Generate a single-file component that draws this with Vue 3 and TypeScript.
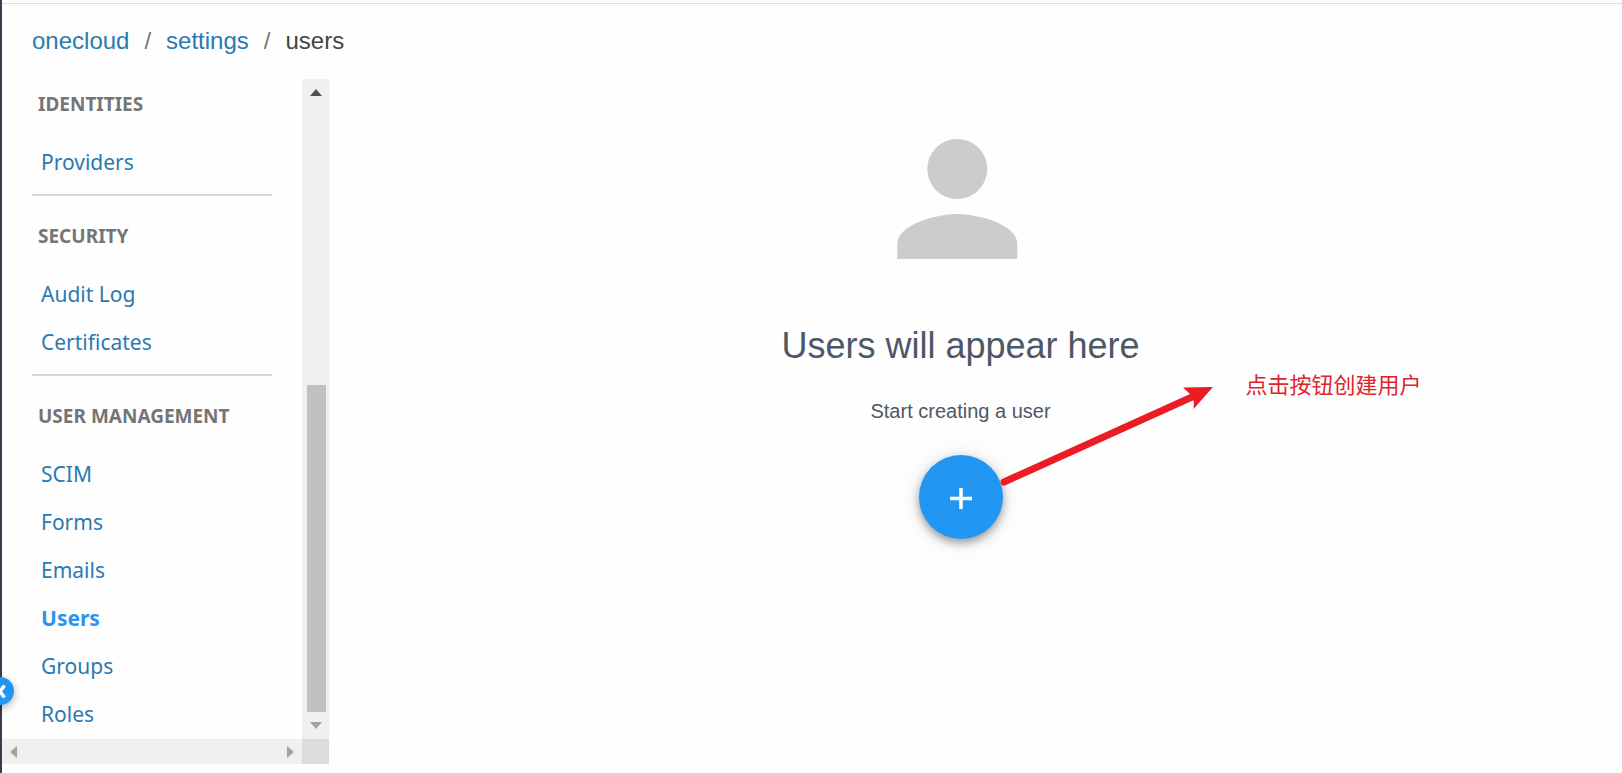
<script setup lang="ts">
interface NavSection {
  title: string
  items: string[]
}

const active = 'Users'

const sections: NavSection[] = [
  { title: 'IDENTITIES', items: ['Providers'] },
  { title: 'SECURITY', items: ['Audit Log', 'Certificates'] },
  { title: 'USER MANAGEMENT', items: ['SCIM', 'Forms', 'Emails', 'Users', 'Groups', 'Roles'] },
]
</script>

<template>
  <div class="page">
    <nav class="crumbs" aria-label="Breadcrumb">
      <a href="#onecloud">onecloud</a>
      <span class="slash">/</span>
      <a href="#settings">settings</a>
      <span class="slash">/</span>
      <span class="current">users</span>
    </nav>

    <div class="body">
      <aside class="sidebar">
        <nav class="list" aria-label="Settings">
          <section v-for="section in sections" :key="section.title" class="group">
            <h2>{{ section.title }}</h2>
            <a
              v-for="item in section.items"
              :key="item"
              href="#"
              class="item"
              :class="{ active: item === active }"
            >{{ item }}</a>
          </section>
        </nav>

        <div class="bar vertical">
          <button type="button" aria-label="Scroll up">
            <svg width="12" height="7" viewBox="0 0 12 7"><path d="M6 0 12 7H0z" fill="#505050" /></svg>
          </button>
          <div class="track"><div class="thumb"></div></div>
          <button type="button" aria-label="Scroll down">
            <svg width="12" height="7" viewBox="0 0 12 7"><path d="M0 0h12L6 7z" fill="#a3a3a3" /></svg>
          </button>
        </div>

        <div class="bar horizontal">
          <button type="button" aria-label="Scroll left">
            <svg width="7" height="12" viewBox="0 0 7 12"><path d="M7 0v12L0 6z" fill="#a3a3a3" /></svg>
          </button>
          <button type="button" aria-label="Scroll right">
            <svg width="7" height="12" viewBox="0 0 7 12"><path d="M0 0 7 6 0 12z" fill="#a3a3a3" /></svg>
          </button>
        </div>
        <div class="corner"></div>
      </aside>

      <main class="empty">
        <svg class="person" viewBox="0 0 25 24" aria-hidden="true">
          <circle cx="12" cy="8" r="4" />
          <path d="M12 14c-2.67 0-8 1.34-8 4v2h16v-2c0-2.66-5.33-4-8-4z" />
        </svg>
        <h1>Users will appear here</h1>
        <p>Start creating a user</p>
        <div class="action">
          <button type="button" class="add" aria-label="Create user">
            <svg width="24" height="24" viewBox="0 0 24 24"><path d="M12 3v21M1 13.5h22" stroke="#fff" stroke-width="3.500" /></svg>
          </button>
          <div class="note">
            <svg width="216" height="106" viewBox="0 0 216 106" aria-hidden="true">
              <path d="M4 101 192 16" stroke="#ec1c24" stroke-width="7" stroke-linecap="round" />
              <path d="M213 6 183 6.500 190 13 194 21 193.500 28z" fill="#ec1c24" />
            </svg>
            <span>点击按钮创建用户</span>
          </div>
        </div>
      </main>
    </div>

    <button type="button" class="collapse" aria-label="Collapse menu">
      <svg width="28" height="28" viewBox="0 0 28 28">
        <path d="M18.500 8.500 14 14.500 18.500 20.500" fill="none" stroke="#fff" stroke-width="3.500" />
      </svg>
    </button>
  </div>
</template>

<style>
body {
  margin: 0;
  background: #fefefe;
}
</style>

<style scoped>
.page {
  position: relative;
  box-sizing: border-box;
  height: 100vh;
  min-height: 600px;
  display: flex;
  flex-direction: column;
  padding: 3px 0 9px 2px;
  background: linear-gradient(to right, #3b3b4b 2px, transparent 2px);
  overflow: hidden;
  font-family: "Liberation Sans", Arial, sans-serif;
}

a {
  color: #2a7ab0;
  text-decoration: none;
}

button {
  display: flex;
  align-items: center;
  justify-content: center;
  padding: 0;
  border: 0;
  background: none;
  cursor: pointer;
}

.crumbs {
  display: flex;
  align-items: center;
  gap: 15px;
  height: 76px;
  box-sizing: border-box;
  padding: 0 30px 2px;
  border-top: 1px solid #dedee0;
  font-size: 24px;
  line-height: 28px;
}

.slash {
  color: #777;
}

.current {
  color: #444;
}

.body {
  flex: 1;
  min-height: 0;
  display: flex;
}

.sidebar {
  flex: none;
  display: grid;
  grid-template-columns: 300px 27px;
  grid-template-rows: minmax(0, 1fr) 25px;
}

.list {
  display: flex;
  flex-direction: column;
  justify-content: flex-end;
  overflow: hidden;
  padding: 0 30px 1px;
  font-family: "Noto Sans", "Open Sans", sans-serif;
}

.group {
  flex: none;
  padding-bottom: 8px;
  border-bottom: 2px solid #d6d6d6;
}

.group:last-child {
  padding-bottom: 0;
  border-bottom: 0;
}

h2 {
  margin: 0;
  padding: 12px 6px 6px;
  color: #757575;
  font-size: 19px;
  font-weight: 700;
  line-height: 56px;
}

.item {
  display: block;
  padding-left: 9px;
  font-size: 21px;
  line-height: 48px;
}

.item.active {
  color: #2e93ee;
  font-weight: 700;
}

.bar {
  display: flex;
  background: #f0f0f0;
}

.vertical {
  flex-direction: column;
}

.vertical button {
  height: 27px;
}

.track {
  flex: 1;
  display: flex;
  flex-direction: column;
  justify-content: flex-end;
  padding: 0 3px 0 5px;
}

.thumb {
  height: 54%;
  background: #c0c0c0;
}

.horizontal {
  justify-content: space-between;
}

.horizontal button {
  width: 23px;
}

.corner {
  background: #dcdcdc;
}

.empty {
  flex: 1;
  display: flex;
  flex-direction: column;
  align-items: center;
  padding: 30px 30px 0 0;
  color: #4c5867;
}

.person {
  width: 188px;
  height: 180px;
  fill: #ccc;
}

h1 {
  margin: 35px 0 0;
  font-size: 36px;
  font-weight: 400;
  line-height: 44px;
}

p {
  margin: 31px 0 0;
  font-size: 20px;
  line-height: 24px;
}

.action {
  position: relative;
  margin-top: 32px;
}

.add {
  width: 84px;
  height: 84px;
  border-radius: 50%;
  background: #2196f3;
  box-shadow: 0 4px 8px rgba(0, 0, 0, 0.36), 0 2px 26px rgba(0, 0, 0, 0.1);
}

.note {
  position: absolute;
  left: 81px;
  bottom: 52px;
  display: flex;
  gap: 30px;
  color: #e0242c;
  font-family: "Liberation Sans", "Noto Sans CJK SC", sans-serif;
  font-size: 22px;
  line-height: 10px;
  white-space: nowrap;
  pointer-events: none;
}

.collapse {
  position: absolute;
  left: -14px;
  bottom: 68px;
  width: 28px;
  height: 28px;
  border-radius: 50%;
  background: #2196f3;
  box-shadow: 0 3px 8px rgba(0, 0, 0, 0.3);
}
</style>
